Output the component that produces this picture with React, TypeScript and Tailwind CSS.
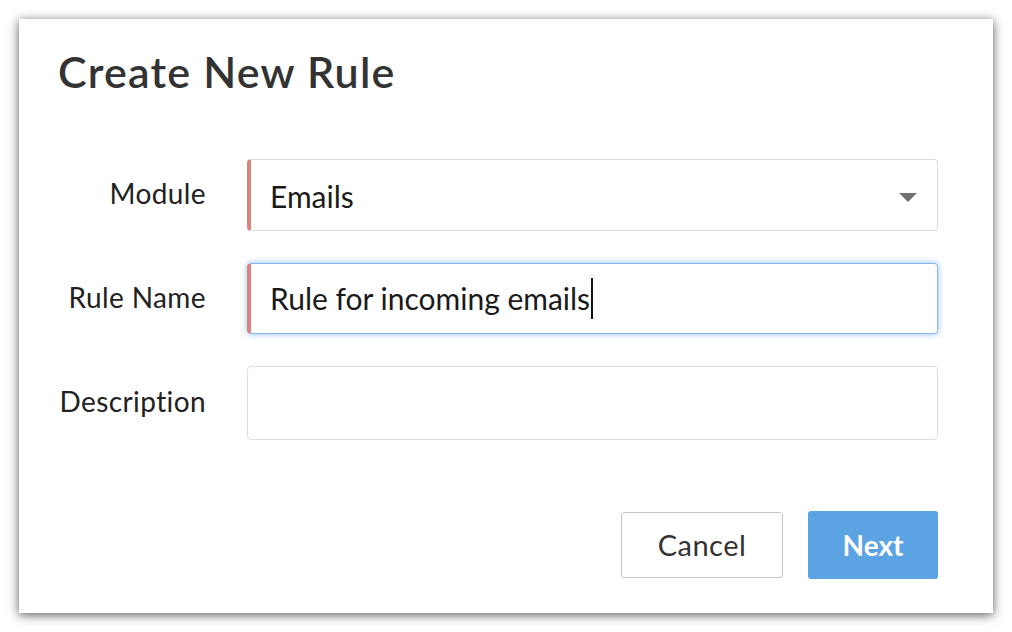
export default function App() {
  return (
    <div className="w-[1012px] h-[632px] bg-white overflow-hidden" style={{ fontFamily: "Lato, 'Open Sans', sans-serif" }}>
      <div className="ml-[19px] mt-[19px] w-[974px] h-[594px] bg-white shadow-[0_2px_10px_rgba(0,0,0,0.65)] pl-[39px] pr-[55px] pt-[31px] flex flex-col">
        <h1 className="text-[43px] leading-none font-semibold text-[#333333] tracking-[1.2px]">Create New Rule</h1>

        <div className="mt-[66px] flex flex-col gap-[32px]">
          <div className="flex items-center">
            <label className="w-[148px] -mt-[4px] text-right text-[28px] text-[#222222] tracking-[0.4px]">Module</label>
            <div className="ml-[41px] flex-1 h-[72px] flex items-center justify-between rounded-[4px] border border-[#dedede] border-l-[4px] border-l-[#da857c] pl-[19px] pr-[20px]">
              <span className="text-[30px] text-[#1a1a1a] mt-[2px]">Emails</span>
              <svg width="18" height="9" viewBox="0 0 18 9" className="mt-[4px]">
                <path d="M0 0 H18 L9 9 Z" fill="#707070" />
              </svg>
            </div>
          </div>

          <div className="flex items-center">
            <label className="w-[148px] -mt-[4px] text-right text-[28px] text-[#222222] tracking-[0.4px]">Rule Name</label>
            <div className="ml-[41px] flex-1 h-[71px] flex items-center rounded-[4px] border-[1.5px] border-[#88b6e8] border-l-[4px] border-l-[#da857c] pl-[19px] shadow-[0_0_6px_rgba(91,163,226,0.7)]">
              <span className="text-[30px] text-[#1a1a1a]">Rule for incoming emails</span>
              <span className="ml-[1px] w-[2px] h-[41px] bg-[#111111]" />
            </div>
          </div>

          <div className="flex items-center">
            <label className="w-[148px] -mt-[4px] text-right text-[28px] text-[#222222] tracking-[0.4px]">Description</label>
            <div className="ml-[41px] flex-1 h-[74px] rounded-[4px] border-[1.5px] border-[#dedede]" />
          </div>
        </div>

        <div className="mt-[71px] flex justify-end gap-[25px]">
          <button className="w-[162px] h-[66px] mt-[1px] rounded-[3px] border-[1.5px] border-[#c6c6c6] bg-white text-[29px] text-[#333333] tracking-[0.5px]">
            Cancel
          </button>
          <button className="w-[130px] h-[68px] rounded-[3px] bg-[#5ca3e3] text-[28px] font-bold text-white">
            Next
          </button>
        </div>
      </div>
    </div>
  )
}
